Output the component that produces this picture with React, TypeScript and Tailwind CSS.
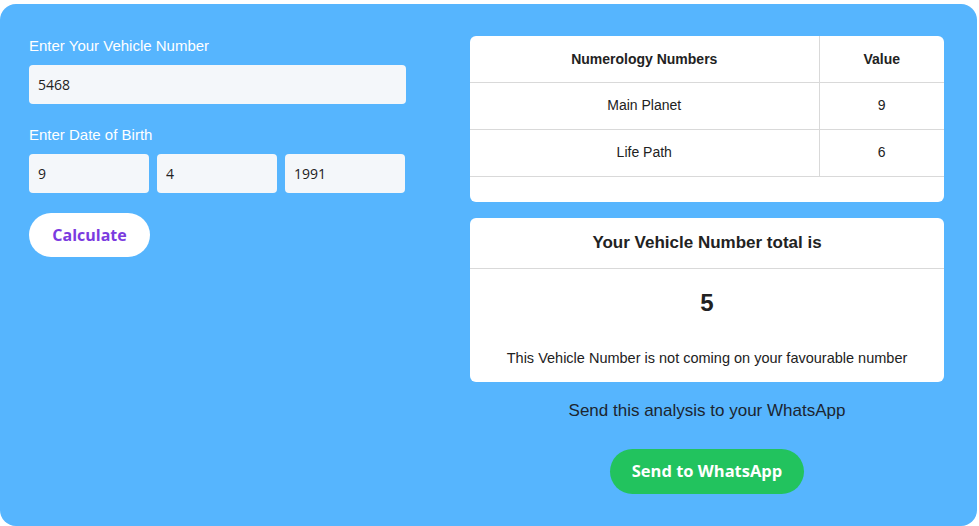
import React from "react";

const arial = { fontFamily: '"Liberation Sans", Arial, sans-serif' };

export default function App() {
  return (
    <div className="w-[979px] h-[526px] bg-white pt-[4px] overflow-hidden">
      <div
        className="w-[977px] h-[522px] bg-[#56b5fe] rounded-2xl flex justify-between pl-[29px] pr-[33px] pt-[32px]"
        style={arial}
      >
        {/* Left column */}
        <div className="w-[377px] flex flex-col pt-[1px]">
          <label className="text-white text-[15px] leading-[18px]">Enter Your Vehicle Number</label>
          <input
            readOnly
            value="5468"
            className="mt-[10px] h-[39px] w-full rounded bg-[#f4f7fa] px-[9px] text-[14px] text-[#222] outline-none font-['Open_Sans',sans-serif]"
          />
          <label className="mt-[22px] text-white text-[15px] leading-[18px]">Enter Date of Birth</label>
          <div className="mt-[10px] flex gap-[8px]">
            {["9", "4", "1991"].map((v) => (
              <input
                key={v}
                readOnly
                value={v}
                className="h-[39px] w-[120px] rounded bg-[#f4f7fa] px-[9px] text-[14px] text-[#222] outline-none font-['Open_Sans',sans-serif]"
              />
            ))}
          </div>
          <div className="mt-[20px]">
            <button className="h-[44px] w-[121px] rounded-full bg-white text-[#7b3be0] text-[16px] font-bold font-['Open_Sans',sans-serif]">
              Calculate
            </button>
          </div>
        </div>

        {/* Right column */}
        <div className="w-[474px] flex flex-col">
          <div className="bg-white rounded-md overflow-hidden pb-[25px]">
            <table className="w-full border-collapse text-[14px] text-[#222]">
              <thead>
                <tr className="h-[46px] border-b border-[#d9d9d9]">
                  <th className="w-[349px] border-r border-[#d9d9d9] font-bold pt-[1px]">Numerology Numbers</th>
                  <th className="font-bold pt-[1px]">Value</th>
                </tr>
              </thead>
              <tbody>
                <tr className="h-[47px] border-b border-[#d9d9d9]">
                  <td className="text-center border-r border-[#d9d9d9]">Main Planet</td>
                  <td className="text-center">9</td>
                </tr>
                <tr className="h-[47px] border-b border-[#d9d9d9]">
                  <td className="text-center border-r border-[#d9d9d9]">Life Path</td>
                  <td className="text-center">6</td>
                </tr>
              </tbody>
            </table>
          </div>

          <div className="mt-[16px] bg-white rounded-md h-[164px] flex flex-col text-[#222]">
            <div className="h-[51px] border-b border-[#d9d9d9] flex items-center justify-center text-[17px] font-bold">
              Your Vehicle Number total is
            </div>
            <div className="pt-[20px] text-center text-[24px] font-bold leading-[28px]">5</div>
            <div className="mt-[32px] text-center text-[14.5px] leading-[18px]">
              This Vehicle Number is not coming on your favourable number
            </div>
          </div>

          <div className="mt-[18px] text-center text-[17px] text-[#1c2530] leading-[22px]">
            Send this analysis to your WhatsApp
          </div>
          <div className="mt-[27px] flex justify-center">
            <button className="h-[45px] w-[194px] rounded-full bg-[#22c35e] text-white text-[16.5px] font-bold font-['Open_Sans',sans-serif]">
              Send to WhatsApp
            </button>
          </div>
        </div>
      </div>
    </div>
  );
}
